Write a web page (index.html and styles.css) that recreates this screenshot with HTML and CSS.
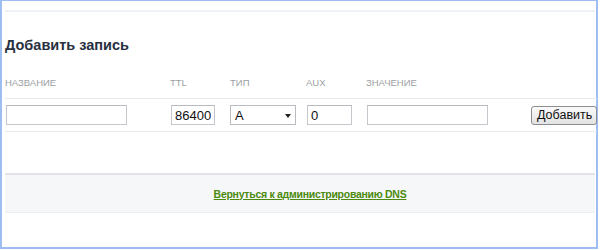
FILE: index.html
```html
<!DOCTYPE html>
<html>
<head>
<meta charset="utf-8">
<link rel="stylesheet" href="styles.css">
</head>
<body>
<div class="frame">
  <div class="topbar"></div>
  <h2 class="title">Добавить запись</h2>
  <div class="form">
    <div class="lbl">НАЗВАНИЕ</div>
    <div class="lbl">TTL</div>
    <div class="lbl">ТИП</div>
    <div class="lbl">AUX</div>
    <div class="lbl">ЗНАЧЕНИЕ</div>
    <div class="lbl"></div>
    <div class="cell"><input class="inp w-name" type="text" value=""></div>
    <div class="cell"><input class="inp w-ttl" type="text" value="86400"></div>
    <div class="cell"><div class="select"><span>A</span><span class="arrow"></span></div></div>
    <div class="cell"><input class="inp w-aux" type="text" value="0"></div>
    <div class="cell"><input class="inp w-name" type="text" value=""></div>
    <div class="cell"><button class="btn">Добавить</button></div>
  </div>
  <div class="footer">
    <a class="back" href="#">Вернуться к администрированию DNS</a>
  </div>
</div>
</body>
</html>
```
FILE: styles.css
```css
html, body {
  margin: 0;
  padding: 0;
  background: #ffffff;
}
body {
  font-family: "Liberation Sans", Arial, sans-serif;
  width: 600px;
  height: 250px;
  overflow: hidden;
}
.frame {
  box-sizing: border-box;
  width: 598px;
  height: 249px;
  border: 2px solid #9ebef2;
  border-top-width: 1px;
  padding: 0 1px 0 3px;
  background: #ffffff;
}
.topbar {
  height: 9px;
  border-bottom: 2px solid #eef1f5;
}
.title {
  margin: 0;
  padding: 26px 0 0 0;
  font-size: 14.5px;
  line-height: 15px;
  font-weight: bold;
  color: #27303f;
}
.form {
  display: grid;
  grid-template-columns: 165px 60px 76px 60px 165px 1fr;
  margin-top: 20px;
}
.lbl {
  font-size: 9.5px;
  color: #9c9fa3;
  height: 14px;
  line-height: 14px;
  padding: 3px 0 8px 0;
  border-bottom: 1px solid #e8eaed;
}
.cell {
  padding: 6px 0 6px 0;
  height: 20px;
  border-bottom: 1px solid #e8eaed;
  display: flex;
  align-items: center;
}
.inp {
  box-sizing: border-box;
  height: 20px;
  border: 1px solid #c4c7cb;
  border-top-color: #b7babf;
  padding: 1px 3px 0;
  margin: 0 0 0 1px;
  font-family: "Liberation Sans", Arial, sans-serif;
  font-size: 13px;
  color: #111;
  background: #fff;
  outline: none;
}
.w-name { width: 121px; }
.w-ttl { width: 44px; }
.w-aux { width: 45px; }
.select {
  box-sizing: border-box;
  width: 66px;
  height: 20px;
  border: 1px solid #b9bcc1;
  display: flex;
  align-items: center;
  justify-content: space-between;
  padding: 1px 4px 0 4px;
  font-size: 13px;
  color: #111;
}
.arrow {
  width: 0;
  height: 0;
  border-left: 3px solid transparent;
  border-right: 3px solid transparent;
  border-top: 4px solid #222;
  margin-top: 1px;
}
.btn {
  box-sizing: border-box;
  height: 19px;
  width: 66px;
  padding: 0 0 0 5px;
  text-align: left;
  white-space: nowrap;
  overflow: hidden;
  font-family: "Liberation Sans", Arial, sans-serif;
  font-size: 12.5px;
  color: #111;
  border: 1px solid #8a8d92;
  border-radius: 3px;
  background: linear-gradient(#fafafa, #e3e3e3);
}
.footer {
  margin-top: 41px;
  height: 37px;
  border-top: 2px solid #e2e4e7;
  border-bottom: 1px solid #eceef0;
  background: #f6f7f9;
  display: flex;
  align-items: center;
  justify-content: center;
}
.back {
  font-size: 10.5px;
  font-weight: bold;
  letter-spacing: -0.28px;
  color: #4c8a0e;
  text-decoration: underline;
  margin-left: 20px;
}
```
